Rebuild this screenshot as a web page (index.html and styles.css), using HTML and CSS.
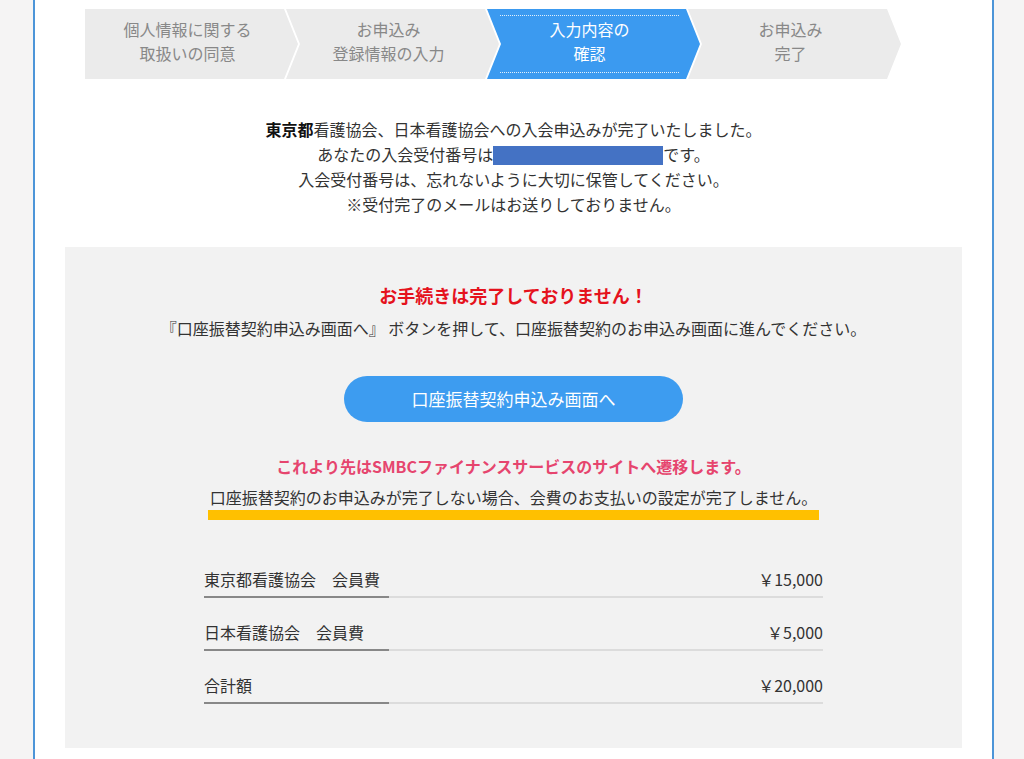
FILE: index.html
```html
<!DOCTYPE html>
<html lang="ja">
<head>
    <meta charset="UTF-8">
    <title>入会申込み完了</title>
    <link rel="stylesheet" href="styles.css">
</head>
<body>
    <div class="page">
        <ol class="steps">
            <li class="step"><span class="label">個人情報に関する<br>取扱いの同意</span></li>
            <li class="step"><span class="label">お申込み<br>登録情報の入力</span></li>
            <li class="step current"><span class="label">入力内容の<br>確認</span></li>
            <li class="step"><span class="label">お申込み<br>完了</span></li>
        </ol>

        <div class="notice">
            <p><strong>東京都</strong>看護協会、日本看護協会への入会申込みが完了いたしました。</p>
            <p>あなたの入会受付番号は<span class="masked"></span>です。</p>
            <p>入会受付番号は、忘れないように大切に保管してください。</p>
            <p>※受付完了のメールはお送りしておりません。</p>
        </div>

        <section class="panel">
            <h2 class="warning">お手続きは完了しておりません！</h2>
            <p class="guide">『口座振替契約申込み画面へ』 ボタンを押して、口座振替契約のお申込み画面に進んでください。</p>

            <a class="btn" href="#">口座振替契約申込み画面へ</a>

            <p class="transfer">これより先はSMBCファイナンスサービスのサイトへ遷移します。</p>
            <p class="caution"><span class="marker">口座振替契約のお申込みが完了しない場合、会費のお支払いの設定が完了しません。</span></p>

            <ul class="fees">
                <li class="feeRow"><span>東京都看護協会　会員費</span><span>￥15,000</span></li>
                <li class="feeRow"><span>日本看護協会　会員費</span><span>￥5,000</span></li>
                <li class="feeRow"><span>合計額</span><span>￥20,000</span></li>
            </ul>
        </section>
    </div>
</body>
</html>
```

FILE: styles.css
```css
body {
    margin: 0;
    background-color: #f5f4f4;
    font-family: "Noto Sans CJK JP", "Noto Sans", sans-serif;
    color: #333;
}

.page {
    box-sizing: border-box;
    width: 961px;
    min-height: 100vh;
    margin-left: 33px;
    background-color: #fff;
    border-left: 2px solid #4d95d8;
    border-right: 2px solid #4d95d8;
    overflow: hidden;
}

/* step bar */
.steps {
    display: flex;
    list-style: none;
    margin: 0;
    padding: 9px 0 0 50px;
}

.step {
    box-sizing: border-box;
    display: flex;
    width: 213px;
    height: 70px;
    margin-left: -12px;
    padding: 6px 21px 6px 13px;
    background-color: #ebebeb;
    color: #888;
    font-size: 16px;
    line-height: 24px;
    clip-path: polygon(0 0, calc(100% - 14px) 0, 100% 50%, calc(100% - 14px) 100%, 0 100%, 14px 50%);
}

.step:first-child {
    margin-left: 0;
    clip-path: polygon(0 0, calc(100% - 14px) 0, 100% 50%, calc(100% - 14px) 100%, 0 100%);
}

.step .label {
    flex: 1;
    display: flex;
    align-items: center;
    justify-content: center;
    padding-bottom: 6px;
    text-align: center;
    border-top: 1px dotted transparent;
    border-bottom: 1px dotted transparent;
}

.step.current {
    background-color: #3b9af0;
    color: #fff;
}

.step.current .label {
    border-color: rgba(255, 255, 255, 0.85);
}

/* completion message */
.notice {
    margin-top: 38px;
    text-align: center;
    font-size: 16px;
    line-height: 25px;
}

.notice p {
    margin: 0;
}

.notice strong {
    color: #111;
}

.masked {
    display: inline-block;
    width: 170px;
    height: 19px;
    background-color: #4472c4;
    vertical-align: -4px;
}

/* grey panel */
.panel {
    margin: 30px 30px 0;
    padding: 36px 0 44px;
    background-color: #f2f2f2;
    text-align: center;
    font-size: 16px;
    line-height: 25px;
}

.warning {
    margin: 0;
    font-size: 18px;
    line-height: 25px;
    color: #e5121d;
}

.guide {
    margin: 8px 0 0;
}

.btn {
    display: block;
    width: 339px;
    height: 46px;
    margin: 35px auto 0;
    border-radius: 23px;
    background-color: #3d9cf0;
    color: #fff;
    font-size: 17px;
    line-height: 46px;
    text-decoration: none;
}

.transfer {
    margin: 32px 0 0;
    font-weight: bold;
    color: #e6456e;
}

.caution {
    margin: 6px 0 0;
}

.marker {
    display: inline-block;
    padding: 0 2px;
    border-bottom: 10px solid #ffc000;
}

.fees {
    list-style: none;
    width: 619px;
    margin: 47px auto 0;
    padding: 0;
    text-align: left;
}

.feeRow {
    display: flex;
    justify-content: space-between;
    padding-bottom: 6px;
    margin-top: 22px;
    background:
        linear-gradient(#888, #888) left bottom / 185px 2px no-repeat,
        linear-gradient(#dcdcdc, #dcdcdc) left bottom / 100% 2px no-repeat;
}

.feeRow:first-child {
    margin-top: 0;
}
```
